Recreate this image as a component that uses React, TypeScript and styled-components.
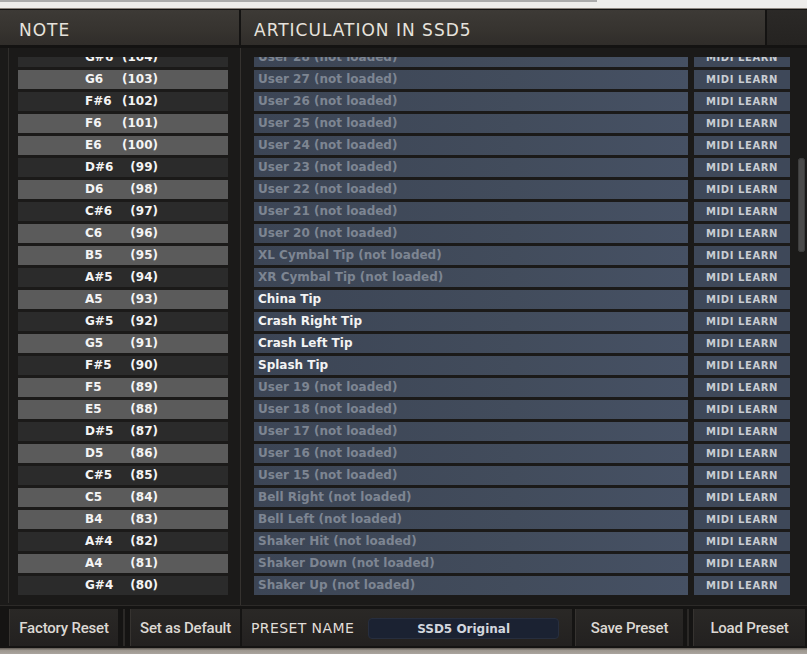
import React from "react";
import styled, { createGlobalStyle } from "styled-components";

const GlobalStyle = createGlobalStyle`
  html, body { margin: 0; padding: 0; background: #1c1b1a; overflow: hidden; }
  #root { width: 807px; height: 654px; }
`;

const Page = styled.div`
  width: 807px;
  height: 654px;
  display: flex;
  flex-direction: column;
  background: #1c1b1a;
  overflow: hidden;
  font-family: "DejaVu Sans", Verdana, sans-serif;
`;

const TopStrip = styled.div`
  flex: none;
  height: 9px;
  box-sizing: border-box;
  background: #eeedeb;
  border-bottom: 1px solid #8d8680;
`;

const TabLine = styled.div`
  width: 597px;
  height: 2px;
  background: #ababab;
`;

const Header = styled.div`
  flex: none;
  height: 39px;
  box-sizing: border-box;
  display: grid;
  grid-template-columns: 239px 524px 40px;
  column-gap: 2px;
  padding: 1px 0 3px;
  background: #141312;
`;

const HeaderCell = styled.div<{ $pad: number; $dim?: boolean }>`
  display: flex;
  align-items: center;
  padding: 4px 0 0 ${(p) => p.$pad}px;
  background: ${(p) =>
    p.$dim
      ? "linear-gradient(180deg, #2b2927, #252321)"
      : "linear-gradient(180deg, #3d3a36 0%, #36332f 60%, #302d2a 100%)"};
  color: #e6e2dc;
  font-size: 17px;
  letter-spacing: 1px;
  white-space: nowrap;
`;

const Body = styled.div`
  flex: none;
  height: 557px;
  display: flex;
  background: #1b1a19;
`;

const NotePanel = styled.div`
  flex: none;
  width: 240px;
  box-sizing: border-box;
  padding: 0 0 2px 8px;
  display: flex;
`;

const NoteFrame = styled.div`
  flex: 1;
  border-left: 1px solid #302e2c;
  padding: 9px 0 0 9px;
`;

const ArtPanel = styled.div`
  flex: 1;
  box-sizing: border-box;
  border-left: 1px solid #35322f;
  padding: 9px 0 0 13px;
  display: flex;
  gap: 6px;
`;

const Viewport = styled.div`
  height: 540px;
  overflow: hidden;
  flex: 1;
`;

const List = styled.div`
  display: flex;
  flex-direction: column;
  gap: 3px;
  margin-top: -9px;
`;

const NoteCell = styled.div<{ $sharp: boolean }>`
  width: 210px;
  height: 19px;
  box-sizing: border-box;
  display: grid;
  grid-template-columns: 36px 37px;
  padding-left: 67px;
  align-items: center;
  background: ${(p) => (p.$sharp ? "#2b2b2b" : "#5b5b5b")};
  color: #f4f4f4;
  font-size: 12px;
  font-weight: bold;
  line-height: 19px;
  white-space: nowrap;
`;

const NoteNum = styled.span`
  text-align: right;
`;

const ArtRow = styled.div`
  height: 19px;
  display: grid;
  grid-template-columns: 434px 96px;
  column-gap: 6px;
`;

const ArtCell = styled.div<{ $loaded: boolean }>`
  box-sizing: border-box;
  padding-left: 4px;
  background: linear-gradient(90deg, #3c4555 0%, #424c5c 60%, #465164 100%);
  color: ${(p) => (p.$loaded ? "#f3f3f3" : "#7d8592")};
  font-size: 12px;
  font-weight: bold;
  line-height: 19px;
  white-space: nowrap;
  overflow: hidden;
`;

const MidiButton = styled.div`
  background: #3e4859;
  color: #c9cdd3;
  font-size: 10px;
  font-weight: bold;
  letter-spacing: 0.6px;
  line-height: 19px;
  text-align: center;
  white-space: nowrap;
`;

const Track = styled.div`
  flex: none;
  width: 11px;
  box-sizing: border-box;
  padding: 0 2px;
`;

const Thumb = styled.div<{ $top: number; $h: number }>`
  margin-top: ${(p) => p.$top}px;
  height: ${(p) => p.$h}px;
  border-radius: 4px;
  background: #4b4b4b;
  box-shadow: inset 0 0 0 1px #3d3d3d;
`;

const BottomBar = styled.div`
  flex: none;
  height: 43px;
  box-sizing: border-box;
  display: flex;
  padding: 3px 0 2px;
  background: #151413;
  border-top: 1px solid #2c2a28;
`;

const Spacer = styled.div<{ $w: number; $line?: boolean }>`
  flex: none;
  width: ${(p) => p.$w}px;
  display: flex;
  justify-content: center;
  &::after {
    content: "";
    width: ${(p) => (p.$line ? 2 : 0)}px;
    background: #2b2927;
  }
`;

const Button = styled.div<{ $w: number }>`
  flex: none;
  width: ${(p) => p.$w}px;
  display: flex;
  align-items: center;
  justify-content: center;
  padding-top: 1px;
  background: linear-gradient(180deg, #2a2826, #232120);
  border-left: 1px solid #363330;
  box-sizing: border-box;
  color: #dcd8d3;
  font-family: Roboto, "Liberation Sans", sans-serif;
  font-weight: 500;
  font-size: 15px;
  letter-spacing: -0.2px;
  white-space: nowrap;
`;

const PresetCell = styled.div`
  flex: none;
  width: 330px;
  box-sizing: border-box;
  display: flex;
  align-items: center;
  padding: 1px 0 0 9px;
  gap: 14px;
  background: linear-gradient(180deg, #2a2826, #232120);
`;

const PresetLabel = styled.span`
  color: #e0ddd8;
  font-size: 14px;
  letter-spacing: 0.4px;
  white-space: nowrap;
`;

const PresetInput = styled.div`
  width: 191px;
  height: 21px;
  box-sizing: border-box;
  border-radius: 4px;
  background: #1b2232;
  border: 1px solid #272e3e;
  color: #d2d6de;
  font-size: 12px;
  font-weight: bold;
  line-height: 20px;
  text-align: center;
`;

const BottomStrip = styled.div`
  flex: 1;
  background: linear-gradient(180deg, #5e5852 0%, #9d978f 40%, #aaa49e 100%);
`;

type Row = { note: string; num: number; art: string; loaded: boolean };

const rows: Row[] = [
  { note: "G#6", num: 104, art: "User 28 (not loaded)", loaded: false },
  { note: "G6", num: 103, art: "User 27 (not loaded)", loaded: false },
  { note: "F#6", num: 102, art: "User 26 (not loaded)", loaded: false },
  { note: "F6", num: 101, art: "User 25 (not loaded)", loaded: false },
  { note: "E6", num: 100, art: "User 24 (not loaded)", loaded: false },
  { note: "D#6", num: 99, art: "User 23 (not loaded)", loaded: false },
  { note: "D6", num: 98, art: "User 22 (not loaded)", loaded: false },
  { note: "C#6", num: 97, art: "User 21 (not loaded)", loaded: false },
  { note: "C6", num: 96, art: "User 20 (not loaded)", loaded: false },
  { note: "B5", num: 95, art: "XL Cymbal Tip (not loaded)", loaded: false },
  { note: "A#5", num: 94, art: "XR Cymbal Tip (not loaded)", loaded: false },
  { note: "A5", num: 93, art: "China Tip", loaded: true },
  { note: "G#5", num: 92, art: "Crash Right Tip", loaded: true },
  { note: "G5", num: 91, art: "Crash Left Tip", loaded: true },
  { note: "F#5", num: 90, art: "Splash Tip", loaded: true },
  { note: "F5", num: 89, art: "User 19 (not loaded)", loaded: false },
  { note: "E5", num: 88, art: "User 18 (not loaded)", loaded: false },
  { note: "D#5", num: 87, art: "User 17 (not loaded)", loaded: false },
  { note: "D5", num: 86, art: "User 16 (not loaded)", loaded: false },
  { note: "C#5", num: 85, art: "User 15 (not loaded)", loaded: false },
  { note: "C5", num: 84, art: "Bell Right (not loaded)", loaded: false },
  { note: "B4", num: 83, art: "Bell Left (not loaded)", loaded: false },
  { note: "A#4", num: 82, art: "Shaker Hit (not loaded)", loaded: false },
  { note: "A4", num: 81, art: "Shaker Down (not loaded)", loaded: false },
  { note: "G#4", num: 80, art: "Shaker Up (not loaded)", loaded: false },
  { note: "G4", num: 79, art: "Shaker (not loaded)", loaded: false },
];

export default function App() {
  return (
    <>
      <GlobalStyle />
      <Page>
        <TopStrip>
          <TabLine />
        </TopStrip>
        <Header>
          <HeaderCell $pad={19}>NOTE</HeaderCell>
          <HeaderCell $pad={13}>ARTICULATION IN SSD5</HeaderCell>
          <HeaderCell $pad={0} $dim />
        </Header>
        <Body>
          <NotePanel>
            <NoteFrame>
              <Viewport>
                <List>
                  {rows.map((r) => (
                    <NoteCell key={r.num} $sharp={r.note.includes("#")}>
                      <span>{r.note}</span>
                      <NoteNum>({r.num})</NoteNum>
                    </NoteCell>
                  ))}
                </List>
              </Viewport>
            </NoteFrame>
          </NotePanel>
          <ArtPanel>
            <Viewport>
              <List>
                {rows.map((r) => (
                  <ArtRow key={r.num}>
                    <ArtCell $loaded={r.loaded}>{r.art}</ArtCell>
                    <MidiButton>MIDI LEARN</MidiButton>
                  </ArtRow>
                ))}
              </List>
            </Viewport>
            <Track>
              <Thumb $top={101} $h={94} />
            </Track>
          </ArtPanel>
        </Body>
        <BottomBar>
          <Spacer $w={9} />
          <Button $w={109}>Factory Reset</Button>
          <Spacer $w={12} $line />
          <Button $w={110}>Set as Default</Button>
          <Spacer $w={2} />
          <PresetCell>
            <PresetLabel>PRESET NAME</PresetLabel>
            <PresetInput>SSD5 Original</PresetInput>
          </PresetCell>
          <Spacer $w={3} />
          <Button $w={108}>Save Preset</Button>
          <Spacer $w={10} $line />
          <Button $w={112}>Load Preset</Button>
        </BottomBar>
        <BottomStrip />
      </Page>
    </>
  );
}
